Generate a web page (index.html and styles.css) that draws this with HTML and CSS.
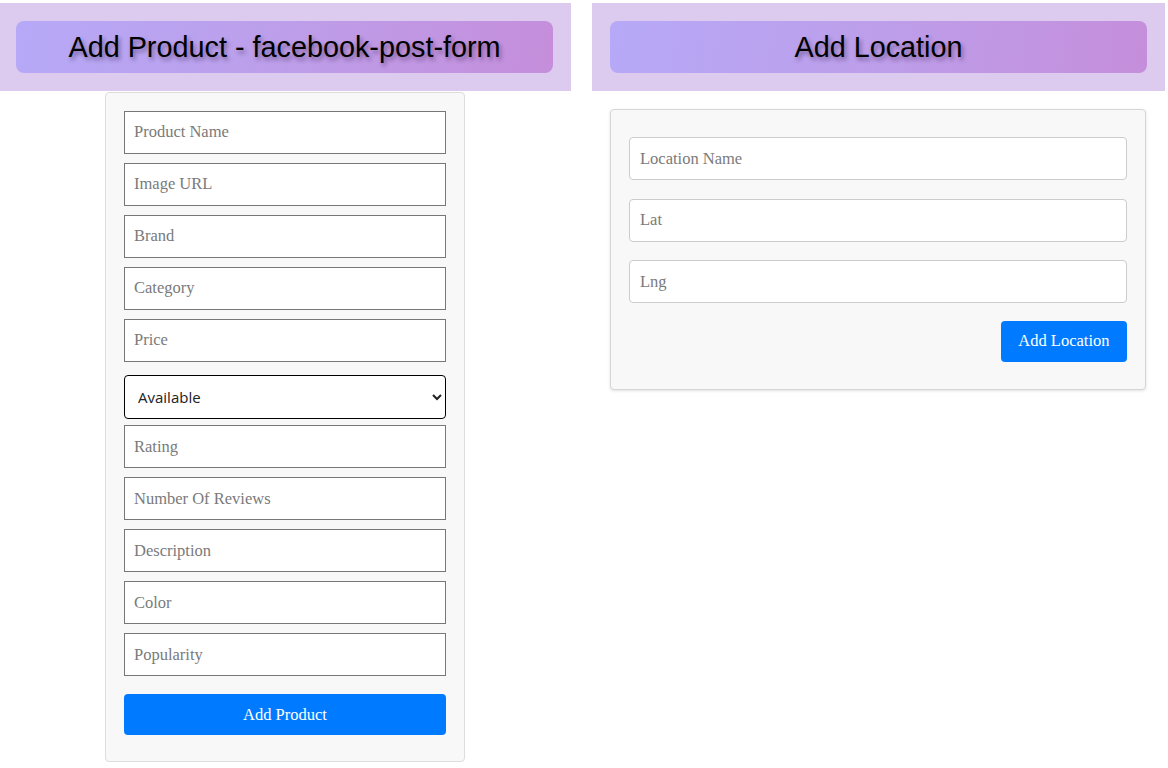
FILE: index.html
```html
<!DOCTYPE html>
<html>
<head>
<meta charset="utf-8">
<link rel="stylesheet" href="styles.css">
</head>
<body>
<div class="page">
  <section class="col col-left">
    <header class="head head-left"><h1 class="title">Add Product - facebook-post-form</h1></header>
    <form class="card product-card">
      <input class="field" placeholder="Product Name">
      <input class="field" placeholder="Image URL">
      <input class="field" placeholder="Brand">
      <input class="field" placeholder="Category">
      <input class="field" placeholder="Price">
      <select class="select"><option>Available</option><option>Unavailable</option></select>
      <input class="field" placeholder="Rating">
      <input class="field" placeholder="Number Of Reviews">
      <input class="field" placeholder="Description">
      <input class="field" placeholder="Color">
      <input class="field" placeholder="Popularity">
      <button type="button" class="btn btn-full">Add Product</button>
    </form>
  </section>
  <section class="col col-right">
    <header class="head head-right"><h1 class="title">Add Location</h1></header>
    <form class="card loc-card">
      <input class="loc-field" placeholder="Location Name">
      <input class="loc-field" placeholder="Lat">
      <input class="loc-field" placeholder="Lng">
      <div class="actions"><button type="button" class="btn btn-loc">Add Location</button></div>
    </form>
  </section>
</div>
</body>
</html>
```

FILE: styles.css
```css
* { box-sizing: border-box; }
html, body { margin: 0; padding: 0; background: #fff; }
body { font-family: "Liberation Serif", serif; }

.page {
  display: grid;
  grid-template-columns: 571px 573px;
  column-gap: 21px;
  padding-top: 3px;
  align-items: start;
}

.head {
  background: #dccbee;
  padding: 18px;
}
.head-left { padding-left: 16px; }

.title {
  margin: 0;
  height: 52px;
  border-radius: 8px;
  background: linear-gradient(100deg, #b6a9f7 0%, #bd9eea 50%, #c58edb 100%);
  font-family: "Liberation Sans", Arial, sans-serif;
  font-weight: normal;
  font-size: 28.8px;
  line-height: 52px;
  text-align: center;
  color: #000;
  text-shadow: 2px 3px 4px rgba(40, 20, 60, 0.45);
}

.card {
  background: #f8f8f8;
  border: 1px solid #dddddd;
  border-radius: 4px;
}

.product-card {
  width: 360px;
  margin: 1px 0 0 105px;
  padding: 17.5px 18px 26px;
  display: flex;
  flex-direction: column;
}

.field {
  display: block;
  width: 322px;
  height: 43px;
  margin: 0 0 9px;
  padding: 0 9px;
  border: 1px solid #777;
  border-radius: 0;
  background: #fff;
  font-family: "Liberation Serif", serif;
  font-size: 16.5px;
  color: #333;
  outline: none;
}
.field::placeholder, .loc-field::placeholder { color: #7a7a7a; }

.select {
  display: block;
  width: 322px;
  height: 44px;
  margin: 4.5px 0 6px;
  padding: 0 9px;
  border: 1px solid #000;
  border-radius: 4px;
  background: #fff;
  font-family: "Open Sans", sans-serif;
  font-size: 15px;
  color: #222;
}

.btn {
  border: none;
  border-radius: 4px;
  background: #007bff;
  color: #fff;
  font-family: "Liberation Serif", serif;
  font-size: 16.5px;
  cursor: pointer;
}
.btn-full {
  width: 322px;
  height: 41px;
  margin-top: 9px;
}

.loc-card {
  margin: 18px 19px 0 18px;
  padding: 27px 18px 27px;
  border-color: #d6d6d6;
  box-shadow: 0 1px 3px rgba(0,0,0,0.12);
  display: flex;
  flex-direction: column;
  gap: 18.5px;
}

.loc-field {
  display: block;
  width: 100%;
  height: 43px;
  padding: 0 10px;
  border: 1px solid #cccccc;
  border-radius: 4px;
  background: #fff;
  font-family: "Liberation Serif", serif;
  font-size: 16.5px;
  color: #333;
  outline: none;
}

.actions {
  display: flex;
  justify-content: flex-end;
  margin-top: -1px;
}
.btn-loc {
  height: 41px;
  padding: 0 17.5px;
}
```
